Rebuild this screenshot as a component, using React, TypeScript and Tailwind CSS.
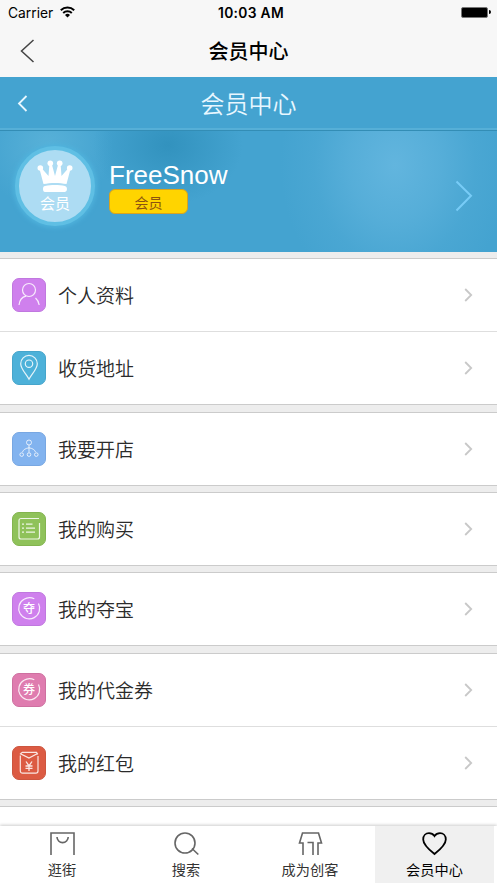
import React from "react";
import clsx from "clsx";

type Item = { label: string; tile: string; icon: React.ReactNode };

const profileIcon = (
  <>
    <circle cx="17" cy="12" r="6.500" />
    <path d="M7 27c.6-5 3.300-8 7-8.800M23.500 20c2 1.700 3.200 3.900 3.700 7" />
  </>
);

const addressIcon = (
  <>
    <path d="M17 28.200c-2.500-5-8.300-10.200-8.300-15.500a8.300 8.300 0 0 1 16.600 0c0 5.300-5.800 10.500-8.300 15.500z" />
    <circle cx="17" cy="12.700" r="3.700" />
  </>
);

const shopIcon = (
  <g strokeWidth="0.900">
    <circle cx="17" cy="10.500" r="2.500" />
    <path d="M17 13v7.500M10.500 20c.7-2.300 3.200-3.700 6.500-4.200 3.300.5 5.800 1.900 6.500 4.200" />
    <circle cx="9.700" cy="22.600" r="1.800" />
    <circle cx="17" cy="22.600" r="1.800" />
    <circle cx="24.300" cy="22.600" r="1.800" />
  </g>
);

const ordersIcon = (
  <>
    <path d="M27 6.500H9A2 2 0 0 0 7 8.500V25a2 2 0 0 0 2 2h16.500a2 2 0 0 0 2-2V11" />
    <path d="M10 12.200h2M14 12.200h6.500M10 16.200h2M14 16.200h9M10 20.200h2M14 20.200h9" strokeWidth="1.300" />
  </>
);

const seal = (char: string) => (
  <>
    <path d="M22.300 6.800A10.500 10.500 0 0 0 12 7.300A10.500 10.500 0 1 0 26.500 11.500" />
    <text x="17" y="21" textAnchor="middle" fontSize="12" fontWeight="500" fill="currentColor" stroke="none">
      {char}
    </text>
  </>
);

const packetIcon = (
  <>
    <path d="M10 6.300h14.500l1.300 2M8.300 9.500V25a2.200 2.200 0 0 0 2.200 2.200h13.300a2.200 2.200 0 0 0 2.200-2.200V10M10 6.300L8.500 7.800l8.500 4.200 8.500-4.500" />
    <path d="M14 15.500l3 4.300 3-4.300M13.500 20h7M13.500 22.300h7M17 19.800v5.200" strokeWidth="1.300" />
  </>
);

const groups: { gap: string; items: Item[] }[] = [
  {
    gap: "mt-[6px]",
    items: [
      { label: "个人资料", tile: "bg-[#cf80ed] border-[#c078df]", icon: profileIcon },
      { label: "收货地址", tile: "bg-[#4db1d9] border-[#46a5cb]", icon: addressIcon },
    ],
  },
  {
    gap: "mt-[7px]",
    items: [{ label: "我要开店", tile: "bg-[#82b3ef] border-[#78a7e2]", icon: shopIcon }],
  },
  {
    gap: "mt-[6px]",
    items: [{ label: "我的购买", tile: "bg-[#8fc25a] border-[#83b44f]", icon: ordersIcon }],
  },
  {
    gap: "mt-[6px]",
    items: [{ label: "我的夺宝", tile: "bg-[#cf80ed] border-[#c078df]", icon: seal("夺") }],
  },
  {
    gap: "mt-[7px]",
    items: [
      { label: "我的代金券", tile: "bg-[#df7caf] border-[#ce70a0]", icon: seal("券") },
      { label: "我的红包", tile: "bg-[#dc5b43] border-[#cd563f]", icon: packetIcon },
    ],
  },
];

const tabs = [
  { label: "逛街", icon: <path d="M1 23V1h23v22M7 5a5.600 5.600 0 0 0 11.200 0" /> },
  {
    label: "搜索",
    icon: (
      <>
        <circle cx="11" cy="11" r="10" />
        <path d="M18 16.500l6.300 6" />
      </>
    ),
  },
  {
    label: "成为创客",
    icon: <path d="M5 23V11H1.500L4.500 1h16l3 10H20v12M9.500 10.500H15V23" />,
  },
  {
    label: "会员中心",
    icon: (
      <path d="M12.500 22C8.500 18.800 1.200 12.700 1.200 7.400 1.200 3.600 3.800 1.200 7 1.200c2.200 0 4.200 1 5.500 2.900 1.300-1.900 3.300-2.900 5.500-2.900 3.200 0 5.800 2.400 5.800 6.200 0 5.300-7.300 11.400-11.300 14.600z" />
    ),
  },
];

function StatusBar() {
  return (
    <div className="grid h-[25px] grid-cols-3 items-center pt-[2px] pr-[6px] pl-2 font-[Inter,sans-serif] text-[13.8px] leading-none text-black">
      <div className="flex items-center gap-[7px]">
        <span>Carrier</span>
        <svg className="-mt-[3px]" width="15" height="12" viewBox="0 0 15 12" fill="none" stroke="currentColor" strokeWidth="2">
          <path d="M.8 4.300a9.700 9.700 0 0 1 13.400 0M3.200 7a6.200 6.200 0 0 1 8.600 0" />
          <path d="M7.500 11.500L5 9a3.600 3.600 0 0 1 5 0z" fill="currentColor" stroke="none" />
        </svg>
      </div>
      <span className="pl-[3px] text-center font-semibold tracking-[0.3px] whitespace-nowrap">10:03 AM</span>
      <div className="-mt-[3px] flex items-center justify-end gap-px">
        <span className="h-[11px] w-[27px] rounded-[2px] border border-[#777] bg-black" />
        <span className="h-1 w-[2px] rounded-r bg-black" />
      </div>
    </div>
  );
}

function Profile() {
  return (
    <section className="flex h-[122px] items-start border-t border-[#338db5] bg-[radial-gradient(ellipse_115px_140px_at_395px_34px,#62b5de,#62b5de99_40%,#62b5de33_70%,#62b5de00),radial-gradient(ellipse_75px_60px_at_168px_14px,#3292be,#3292be00),radial-gradient(ellipse_65px_65px_at_48px_15px,#58b1d8,#58b1d800)] bg-[#44a3d0] pl-[15px]">
      <div className="mt-[15px] flex h-20 w-20 flex-col items-center rounded-full border-4 border-[#5fbfe4] bg-[#addcf3] pt-[10px] text-white shadow-[0_0_4px_2px_#4fb2dc]">
        <svg width="36" height="33" viewBox="0 0 36 33" fill="currentColor">
          <path d="M6.500 24L2.500 9l2-1 7 8 1-13h2l3.500 13 3.500-13h2l1 13 7-8 2 1-4 15c-7-1.500-16-1.500-23 0z" />
          <circle cx="3.300" cy="8" r="2.800" />
          <circle cx="13.300" cy="3.200" r="2.800" />
          <circle cx="22.700" cy="3.200" r="2.800" />
          <circle cx="32.700" cy="8" r="2.800" />
          <path d="M8 26c6-1.200 14-1.200 20 0q2 .4 2 3t-2 3H8q-2 0-2-3t2-3z" />
        </svg>
        <span className="mt-px text-[15px] leading-[18px]">会员</span>
      </div>
      <div className="mt-[29px] ml-[14px] flex flex-col">
        <span className="font-['Liberation_Sans',sans-serif] text-[26px] leading-[30px] text-white">FreeSnow</span>
        <span className="-mt-px flex h-[25px] w-[79px] items-center justify-center rounded-[6px] border-[1.5px] border-[#d9a31d] bg-[#ffd400] text-[14px] leading-none text-[#8b5310]">
          会员
        </span>
      </div>
      <svg className="mt-[49px] mr-[24px] ml-auto" width="18" height="32" viewBox="0 0 18 32" fill="none" stroke="#78ccf7" strokeWidth="2">
        <path d="M1.500 1.500L16 15.700 1.500 30.500" />
      </svg>
    </section>
  );
}

function Row({ label, tile, icon }: Item) {
  return (
    <li className="flex h-[73px] items-center pr-[24px] pl-3 last:h-[72px]">
      <span className={clsx("flex h-[34px] w-[34px] items-center justify-center rounded-[7px] border text-white", tile)}>
        <svg className="shrink-0" width="34" height="34" viewBox="0 0 34 34" fill="none" stroke="currentColor" strokeOpacity="0.85" strokeWidth="1.200">
          {icon}
        </svg>
      </span>
      <span className="ml-3 pb-px text-[19px] leading-none font-[350] text-[#2b2b2b]">{label}</span>
      <svg className="ml-auto" width="9" height="14" viewBox="0 0 9 14" fill="none" stroke="#c8c8c8" strokeWidth="1.800">
        <path d="M1.200 1l6 6-6 6" />
      </svg>
    </li>
  );
}

export default function App() {
  return (
    <div className="flex h-[883px] w-[497px] flex-col overflow-hidden bg-[#ededed] font-['Noto_Sans_CJK_SC',sans-serif]">
      <header className="h-[77px] shrink-0 bg-[#f7f7f7]">
        <StatusBar />
        <div className="flex h-[51px] items-center">
          <svg className="ml-5 shrink-0" width="15" height="24" viewBox="0 0 15 24" fill="none" stroke="#444" strokeWidth="1.500">
            <path d="M13.500 1L1.500 12l12 11" />
          </svg>
          <h1 className="mr-[35px] flex-1 text-center text-[20px] leading-none font-medium text-black">会员中心</h1>
        </div>
      </header>

      <div className="flex h-[53px] shrink-0 items-center border-b-2 border-[#56afd7] bg-[#44a3d0]">
        <svg className="mt-[2px] ml-[17px] shrink-0" width="11" height="17" viewBox="0 0 11 17" fill="none" stroke="#e8f7ff" strokeWidth="1.800">
          <path d="M9.500 1L2 8.500 9.500 16" />
        </svg>
        <h2 className="mr-[28px] flex-1 text-center text-[24px] leading-none font-[350] text-[#e8f7ff]">会员中心</h2>
      </div>

      <main className="min-h-0 flex-1 overflow-hidden">
        <Profile />
        {groups.map((group) => (
          <ul
            key={group.items[0].label}
            className={clsx("divide-y divide-[#dedede] border-y border-[#cbcbcb] bg-white", group.gap)}
          >
            {group.items.map((item) => (
              <Row key={item.label} {...item} />
            ))}
          </ul>
        ))}
        <div className="mt-[6px] h-[72px] border-t border-[#cbcbcb] bg-white" />
      </main>

      <nav className="z-10 grid h-[57px] shrink-0 grid-cols-[124px_124px_124px_1fr] bg-white shadow-[0_-1px_3px_rgba(0,0,0,0.2)]">
        {tabs.map((tab, i) => {
          const active = i === tabs.length - 1;
          return (
            <div
              key={tab.label}
              className={clsx(
                "mx-[3px] flex flex-col items-center pt-[6px]",
                active ? "bg-[#f0f0f0] text-black" : "text-[#333]"
              )}
            >
              <svg
                className={active ? "text-black" : "text-[#666]"}
                width="25"
                height="24"
                viewBox="0 0 25 24"
                fill="none"
                stroke="currentColor"
                strokeWidth={active ? 1.8 : 1.6}
              >
                {tab.icon}
              </svg>
              <span className="mt-[6px] text-[14.200px] leading-[14px]">{tab.label}</span>
            </div>
          );
        })}
      </nav>
    </div>
  );
}
